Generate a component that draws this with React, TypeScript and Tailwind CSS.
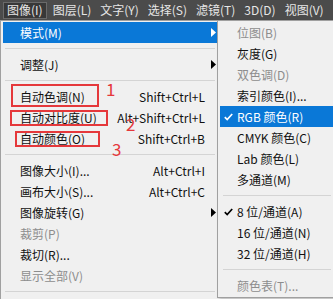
import type { ReactNode } from "react";

type Row =
  | { kind: "sep" }
  | {
      kind: "item";
      label: string;
      shortcut?: string;
      disabled?: boolean;
      sub?: boolean;
      active?: boolean;
      checked?: boolean;
    };

const mainRows: Row[] = [
  { kind: "item", label: "模式(M)", sub: true, active: true },
  { kind: "sep" },
  { kind: "item", label: "调整(J)", sub: true },
  { kind: "sep" },
  { kind: "item", label: "自动色调(N)", shortcut: "Shift+Ctrl+L" },
  { kind: "item", label: "自动对比度(U)", shortcut: "Alt+Shift+Ctrl+L" },
  { kind: "item", label: "自动颜色(O)", shortcut: "Shift+Ctrl+B" },
  { kind: "sep" },
  { kind: "item", label: "图像大小(I)...", shortcut: "Alt+Ctrl+I" },
  { kind: "item", label: "画布大小(S)...", shortcut: "Alt+Ctrl+C" },
  { kind: "item", label: "图像旋转(G)", sub: true },
  { kind: "item", label: "裁剪(P)", disabled: true },
  { kind: "item", label: "裁切(R)..." },
  { kind: "item", label: "显示全部(V)", disabled: true },
  { kind: "sep" },
];

const modeRows: Row[] = [
  { kind: "item", label: "位图(B)", disabled: true },
  { kind: "item", label: "灰度(G)" },
  { kind: "item", label: "双色调(D)", disabled: true },
  { kind: "item", label: "索引颜色(I)..." },
  { kind: "item", label: "RGB 颜色(R)", checked: true, active: true },
  { kind: "item", label: "CMYK 颜色(C)" },
  { kind: "item", label: "Lab 颜色(L)" },
  { kind: "item", label: "多通道(M)" },
  { kind: "sep" },
  { kind: "item", label: "8 位/通道(A)", checked: true },
  { kind: "item", label: "16 位/通道(N)" },
  { kind: "item", label: "32 位/通道(H)" },
  { kind: "sep" },
  { kind: "item", label: "颜色表(T)...", disabled: true },
];

const menuBar = ["图像(I)", "图层(L)", "文字(Y)", "选择(S)", "滤镜(T)", "3D(D)", "视图(V)"];

function Arrow({ white }: { white?: boolean }) {
  return (
    <svg width="5" height="9" viewBox="0 0 5 9" className="shrink-0">
      <path d="M0 0 L5 4.5 L0 9 Z" fill={white ? "#ffffff" : "#000000"} />
    </svg>
  );
}

function Check({ white }: { white?: boolean }) {
  return (
    <svg width="9" height="8" viewBox="0 0 9 8" className="shrink-0">
      <path
        d="M0.8 4.2 L3.2 6.6 L8.2 1"
        fill="none"
        stroke={white ? "#ffffff" : "#000000"}
        strokeWidth="1.7"
      />
    </svg>
  );
}

function Separator({ inset }: { inset: string }) {
  return (
    <div className={`flex h-[11px] items-center ${inset}`}>
      <div className="h-px w-full bg-[#d4d4d4]" />
    </div>
  );
}

function MainItem({ row }: { row: Extract<Row, { kind: "item" }> }) {
  const color = row.active ? "text-white" : row.disabled ? "text-[#8d8d8d]" : "text-[#111]";
  return (
    <div
      className={`flex h-[21px] items-center whitespace-nowrap pl-[17px] ${
        row.active ? "bg-[#0a78d7]" : ""
      } ${color}`}
    >
      <span className="flex-1">{row.label}</span>
      {row.shortcut && <span className="pr-[12px]">{row.shortcut}</span>}
      {row.sub && (
        <span className="pr-[1px]">
          <Arrow white={row.active} />
        </span>
      )}
    </div>
  );
}

function SubItem({ row }: { row: Extract<Row, { kind: "item" }> }) {
  const color = row.active ? "text-white" : row.disabled ? "text-[#8d8d8d]" : "text-[#111]";
  return (
    <div
      className={`flex h-[21px] items-center whitespace-nowrap ${
        row.active ? "bg-[#0a78d7]" : ""
      } ${color}`}
    >
      <span className="flex w-[17px] justify-center">
        {row.checked && <Check white={row.active} />}
      </span>
      <span>{row.label}</span>
    </div>
  );
}

function Annotation({ className, children }: { className: string; children?: ReactNode }) {
  return <div className={`absolute ${className}`}>{children}</div>;
}

export default function App() {
  return (
    <div
      className="relative h-[299px] w-[333px] overflow-hidden bg-[#f0f0f0] text-[12px] leading-none"
      style={{ fontFamily: '"Noto Sans CJK SC", "Noto Sans", sans-serif' }}
    >
      {/* menu bar */}
      <div className="flex h-[20px] items-center whitespace-nowrap bg-[#4b4b4b] pl-[3px] text-[#e6e6e6]">
        {menuBar.map((m, i) => (
          <div
            key={m}
            className={`flex h-[17px] shrink-0 items-center px-[3px] ${
              i === 0 ? "border border-[#6a6a6a] bg-[#383838]" : "ml-[3px]"
            }`}
          >
            {m}
          </div>
        ))}
      </div>

      {/* image menu */}
      <div className="h-[279px] w-[219px] border-l border-t border-[#a0a0a0] px-[2px] pt-[1px]">
        {mainRows.map((r, i) =>
          r.kind === "sep" ? (
            <Separator key={i} inset="px-[2px]" />
          ) : (
            <MainItem key={i} row={r} />
          ),
        )}
      </div>

      {/* mode submenu */}
      <div className="absolute left-[217px] top-[20px] w-[120px] border border-[#a0a0a0] bg-[#f0f0f0] px-[2px] pt-[1px] pb-[1px] shadow-[2px_2px_3px_rgba(0,0,0,0.2)]">
        {modeRows.map((r, i) =>
          r.kind === "sep" ? (
            <Separator key={i} inset="px-[3px]" />
          ) : (
            <SubItem key={i} row={r} />
          ),
        )}
      </div>

      {/* red annotations */}
      <Annotation className="left-[11px] top-[84px] h-[23px] w-[88px] border-2 border-[#e5383b]" />
      <Annotation className="left-[10px] top-[110px] h-[16px] w-[98px] border-2 border-[#e5383b]" />
      <Annotation className="left-[15px] top-[131px] h-[16px] w-[85px] border-2 border-[#e5383b]" />
      <Annotation className="left-[106px] top-[80px] text-[17px] text-[#e5383b]">1</Annotation>
      <Annotation className="left-[126px] top-[115px] text-[17px] text-[#e5383b]">2</Annotation>
      <Annotation className="left-[112px] top-[140px] text-[17px] text-[#e5383b]">3</Annotation>
    </div>
  );
}
